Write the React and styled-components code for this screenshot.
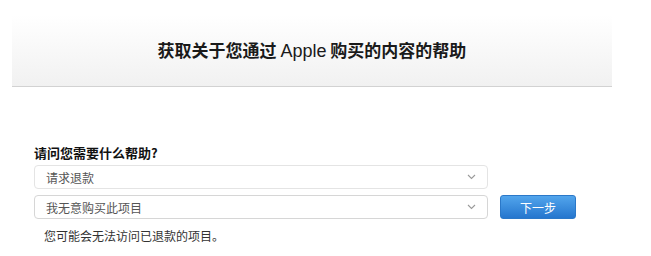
import React from 'react'
import styled, {createGlobalStyle} from 'styled-components'

const GlobalStyle = createGlobalStyle`
  body {
    margin: 0;
    background: #fff;
    font-family: "Noto Sans CJK SC", "Liberation Sans", sans-serif;
    color: #333;
  }
`

const Page = styled.div`
  width: 651px;
  padding-top: 15px;
`

const Header = styled.header`
  margin-left: 12px;
  width: 600px;
  height: 71px;
  display: flex;
  align-items: center;
  justify-content: center;
  background: linear-gradient(#ffffff, #f1f1f1);
  border-bottom: 1px solid #d2d2d2;
`

const Title = styled.h1`
  margin: 0 0 3px 0;
  font-size: 17px;
  font-weight: 700;
  color: #1a1a1a;
`

const Latin = styled.span`
  font-family: "Liberation Sans", "Noto Sans CJK SC", sans-serif;
  font-weight: 400;
  font-size: 18px;
`

const Form = styled.section`
  padding: 57px 0 0 34px;
  display: flex;
  flex-direction: column;
`

const Label = styled.label`
  font-size: 13px;
  font-weight: 700;
  color: #111;
  line-height: 17px;
  margin-bottom: 4px;
`

const Row = styled.div`
  display: flex;
  align-items: center;
  gap: 12px;
  margin-bottom: ${p => p.$gap || 0}px;
`

const Select = styled.div`
  box-sizing: border-box;
  width: 454px;
  height: 24px;
  display: flex;
  align-items: center;
  justify-content: space-between;
  padding: 0 11px 0 11px;
  border: 1px solid ${p => (p.$light ? '#e4e4e4' : '#d6d6d6')};
  border-radius: 4px;
  background: #fff;
  font-size: 12px;
  color: #555;
`

const Chevron = () => (
  <svg width="9" height="6" viewBox="0 0 9 6">
    <path d="M1 1l3.5 3.5L8 1" fill="none" stroke="#9a9a9a" strokeWidth="1.1" />
  </svg>
)

const Button = styled.button`
  box-sizing: border-box;
  width: 76px;
  height: 24px;
  border: 1px solid #2b78c8;
  border-radius: 3px;
  background: linear-gradient(#52a5ec, #2576ce);
  color: #fff;
  font-family: inherit;
  font-size: 12px;
  padding: 0;
  cursor: pointer;
`

const Hint = styled.p`
  margin: 9px 0 0 10px;
  font-size: 12px;
  line-height: 16px;
  color: #333;
`

export default function App() {
  return (
    <Page>
      <GlobalStyle />
      <Header>
        <Title>
          获取关于您通过 <Latin>Apple</Latin> 购买的内容的帮助
        </Title>
      </Header>
      <Form>
        <Label>请问您需要什么帮助?</Label>
        <Row $gap={6}>
          <Select $light>
            <span>请求退款</span>
            <Chevron />
          </Select>
        </Row>
        <Row>
          <Select>
            <span>我无意购买此项目</span>
            <Chevron />
          </Select>
          <Button>下一步</Button>
        </Row>
        <Hint>您可能会无法访问已退款的项目。</Hint>
      </Form>
    </Page>
  )
}
